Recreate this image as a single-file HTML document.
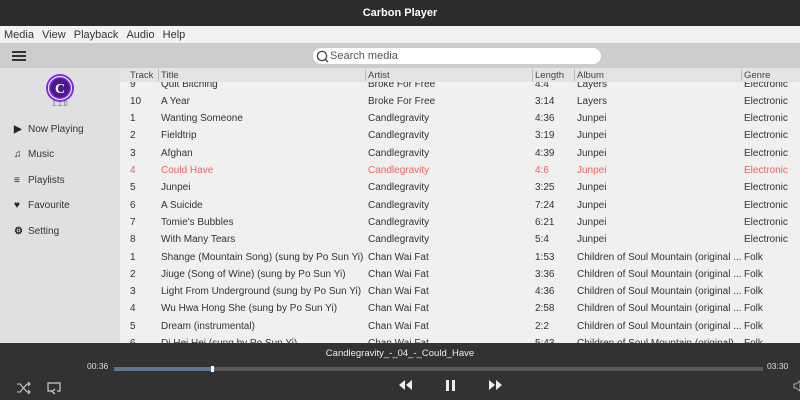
<!DOCTYPE html>
<html><head><style>
*{margin:0;padding:0;box-sizing:border-box}
body{width:800px;height:400px;overflow:hidden;font-family:"Liberation Sans",sans-serif;background:#f0f0f0;position:relative;font-size:10px;color:#333}
.abs{position:absolute}
#title{left:0;top:0;width:800px;height:26px;background:#2c2c2c;color:#fff;font-weight:bold;font-size:11px;text-align:center;line-height:26px}
#menu{left:0;top:26px;width:800px;height:17px;background:#f2f2f2;font-size:11px;line-height:18px;color:#333}
#menu span{margin-left:4px;margin-right:1px}
#tool{left:0;top:43px;width:800px;height:25px;background:#cdcdcd}
#search{left:313px;top:48px;width:288px;height:16px;background:#fff;border-radius:8px;font-size:11px;color:#555;line-height:16px;padding-left:17px}
#side{left:0;top:68px;width:120px;height:275px;background:#e0e0e0}
.nav{position:absolute;left:14px;font-size:10px;color:#333}
.nav i{display:inline-block;width:14px;font-style:normal;font-size:10px;font-weight:bold;color:#222}
#hdr{left:120px;top:68px;width:680px;height:14px;background:#e4e4e4;font-size:9.5px;color:#444;line-height:14px}
#hdr span,.r span{position:absolute;white-space:nowrap}
.sep{position:absolute;top:1px;width:1px;height:12px;background:#bbb}
#body{left:120px;top:82px;width:680px;height:261px;overflow:hidden}
.r{position:absolute;left:0;width:680px;height:17.3px;line-height:17.3px;font-size:10px;color:#333}
.r.red{color:#f06060}
#player{left:0;top:343px;width:800px;height:57px;background:#323232;color:#ddd}
</style></head><body>
<div id="title" class="abs">Carbon Player</div>
<div id="menu" class="abs"><span style="margin-left:4px">Media</span> <span>View</span> <span>Playback</span> <span>Audio</span> <span>Help</span></div>
<div id="tool" class="abs">
<div class="abs" style="left:12px;top:8px;width:14px;height:1.5px;background:#333"></div>
<div class="abs" style="left:12px;top:12px;width:14px;height:1.5px;background:#333"></div>
<div class="abs" style="left:12px;top:16px;width:14px;height:1.5px;background:#333"></div>
</div>
<div id="search" class="abs">Search media
<svg class="abs" style="left:3px;top:2px" width="13" height="13"><circle cx="6" cy="6" r="4.6" fill="none" stroke="#444" stroke-width="1.3"/><line x1="9.3" y1="9.3" x2="12" y2="12" stroke="#444" stroke-width="1.3"/></svg></div>
<div id="side" class="abs">
<svg class="abs" style="left:45px;top:5px" width="30" height="30"><circle cx="15" cy="15" r="14" fill="#7a2ee0"/><circle cx="15" cy="15" r="11.5" fill="none" stroke="#fff" stroke-width="1"/><circle cx="15" cy="15" r="9.5" fill="#4a1a8a"/><text x="15" y="20" font-family="Liberation Serif" font-weight="bold" font-size="14" fill="#fff" text-anchor="middle">C</text></svg>
<div class="abs" style="left:52px;top:33px;font-size:7px;color:#666">1.1.0</div>
<div class="nav" style="top:56px"><i>▶</i>Now Playing</div>
<div class="nav" style="top:81px"><i>♫</i>Music</div>
<div class="nav" style="top:107px"><i>≡</i>Playlists</div>
<div class="nav" style="top:132px"><i>♥</i>Favourite</div>
<div class="nav" style="top:158px"><i>⚙</i>Setting</div>
</div>
<div id="hdr" class="abs" style="line-height:15px">
<span style="left:10px">Track</span><div class="sep" style="left:38px"></div>
<span style="left:41px">Title</span><div class="sep" style="left:245px"></div>
<span style="left:248px">Artist</span><div class="sep" style="left:412px"></div>
<span style="left:415px">Length</span><div class="sep" style="left:454px"></div>
<span style="left:457px">Album</span><div class="sep" style="left:621px"></div>
<span style="left:624px">Genre</span>
</div>
<div id="body" class="abs">
<div style="position:absolute;top:-6.5px;left:0">
<div class="r" style="top:0"><span style="left:10px">9</span><span style="left:41px">Quit Bitching</span><span style="left:248px">Broke For Free</span><span style="left:415px">4:4</span><span style="left:457px">Layers</span><span style="left:624px">Electronic</span></div>
<div class="r" style="top:17.3px"><span style="left:10px">10</span><span style="left:41px">A Year</span><span style="left:248px">Broke For Free</span><span style="left:415px">3:14</span><span style="left:457px">Layers</span><span style="left:624px">Electronic</span></div>
<div class="r" style="top:34.6px"><span style="left:10px">1</span><span style="left:41px">Wanting Someone</span><span style="left:248px">Candlegravity</span><span style="left:415px">4:36</span><span style="left:457px">Junpei</span><span style="left:624px">Electronic</span></div>
<div class="r" style="top:51.9px"><span style="left:10px">2</span><span style="left:41px">Fieldtrip</span><span style="left:248px">Candlegravity</span><span style="left:415px">3:19</span><span style="left:457px">Junpei</span><span style="left:624px">Electronic</span></div>
<div class="r" style="top:69.2px"><span style="left:10px">3</span><span style="left:41px">Afghan</span><span style="left:248px">Candlegravity</span><span style="left:415px">4:39</span><span style="left:457px">Junpei</span><span style="left:624px">Electronic</span></div>
<div class="r red" style="top:86.5px"><span style="left:10px">4</span><span style="left:41px">Could Have</span><span style="left:248px">Candlegravity</span><span style="left:415px">4:6</span><span style="left:457px">Junpei</span><span style="left:624px">Electronic</span></div>
<div class="r" style="top:103.8px"><span style="left:10px">5</span><span style="left:41px">Junpei</span><span style="left:248px">Candlegravity</span><span style="left:415px">3:25</span><span style="left:457px">Junpei</span><span style="left:624px">Electronic</span></div>
<div class="r" style="top:121.1px"><span style="left:10px">6</span><span style="left:41px">A Suicide</span><span style="left:248px">Candlegravity</span><span style="left:415px">7:24</span><span style="left:457px">Junpei</span><span style="left:624px">Electronic</span></div>
<div class="r" style="top:138.4px"><span style="left:10px">7</span><span style="left:41px">Tomie's Bubbles</span><span style="left:248px">Candlegravity</span><span style="left:415px">6:21</span><span style="left:457px">Junpei</span><span style="left:624px">Electronic</span></div>
<div class="r" style="top:155.7px"><span style="left:10px">8</span><span style="left:41px">With Many Tears</span><span style="left:248px">Candlegravity</span><span style="left:415px">5:4</span><span style="left:457px">Junpei</span><span style="left:624px">Electronic</span></div>
<div class="r" style="top:173px"><span style="left:10px">1</span><span style="left:41px">Shange (Mountain Song) (sung by Po Sun Yi)</span><span style="left:248px">Chan Wai Fat</span><span style="left:415px">1:53</span><span style="left:457px">Children of Soul Mountain (original ...</span><span style="left:624px">Folk</span></div>
<div class="r" style="top:190.3px"><span style="left:10px">2</span><span style="left:41px">Jiuge (Song of Wine) (sung by Po Sun Yi)</span><span style="left:248px">Chan Wai Fat</span><span style="left:415px">3:36</span><span style="left:457px">Children of Soul Mountain (original ...</span><span style="left:624px">Folk</span></div>
<div class="r" style="top:207.6px"><span style="left:10px">3</span><span style="left:41px">Light From Underground (sung by Po Sun Yi)</span><span style="left:248px">Chan Wai Fat</span><span style="left:415px">4:36</span><span style="left:457px">Children of Soul Mountain (original ...</span><span style="left:624px">Folk</span></div>
<div class="r" style="top:224.9px"><span style="left:10px">4</span><span style="left:41px">Wu Hwa Hong She (sung by Po Sun Yi)</span><span style="left:248px">Chan Wai Fat</span><span style="left:415px">2:58</span><span style="left:457px">Children of Soul Mountain (original ...</span><span style="left:624px">Folk</span></div>
<div class="r" style="top:242.2px"><span style="left:10px">5</span><span style="left:41px">Dream (instrumental)</span><span style="left:248px">Chan Wai Fat</span><span style="left:415px">2:2</span><span style="left:457px">Children of Soul Mountain (original ...</span><span style="left:624px">Folk</span></div>
<div class="r" style="top:259.5px"><span style="left:10px">6</span><span style="left:41px">Di Hei Hei (sung by Po Sun Yi)</span><span style="left:248px">Chan Wai Fat</span><span style="left:415px">5:43</span><span style="left:457px">Children of Soul Mountain (original)</span><span style="left:624px">Folk</span></div>
</div></div>
<div id="player" class="abs">
<div class="abs" style="left:0;width:800px;top:5px;text-align:center;font-size:9.5px;color:#eee">Candlegravity_-_04_-_Could_Have</div>
<div class="abs" style="left:87px;top:18px;font-size:8.5px">00:36</div>
<div class="abs" style="left:767px;top:18px;font-size:8.5px">03:30</div>
<div class="abs" style="left:114px;top:24px;width:649px;height:4px;background:#5a5a5a"></div>
<div class="abs" style="left:114px;top:24px;width:98px;height:4px;background:#5f7596"></div>
<div class="abs" style="left:211px;top:23px;width:3px;height:6px;background:#fff"></div>
<svg class="abs" style="left:16px;top:38px" width="16" height="14"><path d="M1 3h3l7 8h3M1 11h3l7-8h3M12 1l2 2-2 2M12 9l2 2-2 2" fill="none" stroke="#ccc" stroke-width="1.1"/></svg>
<svg class="abs" style="left:46px;top:38px" width="16" height="14"><path d="M7 10H2V2h12v8h-3" fill="none" stroke="#ccc" stroke-width="1.2"/><path d="M9 8l-3 2.5 3 2.5" fill="none" stroke="#ccc" stroke-width="1.2"/></svg>
<svg class="abs" style="left:399px;top:37px" width="14" height="10"><path d="M6 0v10L0 5zM13 0v10L7 5z" fill="#eee"/></svg>
<div class="abs" style="left:446px;top:37px;width:3px;height:11px;background:#eee"></div>
<div class="abs" style="left:452px;top:37px;width:3px;height:11px;background:#eee"></div>
<svg class="abs" style="left:489px;top:37px" width="14" height="10"><path d="M0 0v10l6-5zM7 0v10l6-5z" fill="#eee"/></svg>
<svg class="abs" style="left:793px;top:37px" width="8" height="12"><path d="M1 4h2l4-3v10L3 8H1z" fill="none" stroke="#aaa"/></svg>
</div>
</body></html>
